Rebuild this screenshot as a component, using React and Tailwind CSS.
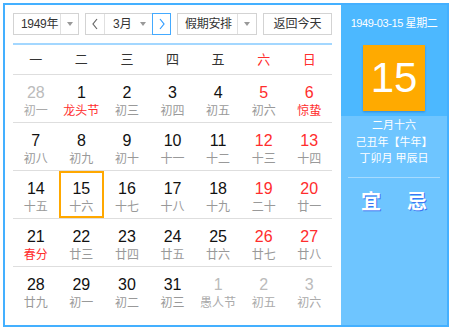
import React from 'react'

// Perpetual calendar widget — month grid on the left, day detail panel on the right.

const FONT = "font-['Liberation_Sans','Noto_Sans_CJK_SC',sans-serif]"

const weekdays = ['一', '二', '三', '四', '五', '六', '日']

// [day, lunar, flags]  o = other month, f = festival (red lunar)
const weeks = [
  [[28, '初一', 'o'], [1, '龙头节', 'f'], [2, '初三'], [3, '初四'], [4, '初五'], [5, '初六'], [6, '惊蛰', 'f']],
  [[7, '初八'], [8, '初九'], [9, '初十'], [10, '十一'], [11, '十二'], [12, '十三'], [13, '十四']],
  [[14, '十五'], [15, '十六', 's'], [16, '十七'], [17, '十八'], [18, '十九'], [19, '二十'], [20, '廿一']],
  [[21, '春分', 'f'], [22, '廿三'], [23, '廿四'], [24, '廿五'], [25, '廿六'], [26, '廿七'], [27, '廿八']],
  [[28, '廿九'], [29, '初一'], [30, '初二'], [31, '初三'], [1, '愚人节', 'o'], [2, '初五', 'o'], [3, '初六', 'o']],
]

function Caret() {
  return <span className="w-0 h-0 border-l-[3px] border-r-[3px] border-t-[4px] border-l-transparent border-r-transparent border-t-[#999]" />
}

function Select({ label, width, textWidth }) {
  return (
    <div className={`flex h-[22px] border border-[#d3d3d3] bg-white ${width}`}>
      <div className={`flex items-center pl-[7px] whitespace-nowrap text-[12px] tracking-[-0.3px] text-[#333] ${textWidth}`}>{label}</div>
      <div className="flex-1 flex items-center justify-center border-l border-[#e0e0e0]">
        <Caret />
      </div>
    </div>
  )
}

function Chevron({ dir, color }) {
  const points = dir === 'left' ? '6,1 2,6 6,11' : '2,1 6,6 2,11'
  return (
    <svg width="8" height="12" viewBox="0 0 8 12">
      <polyline points={points} fill="none" stroke={color} strokeWidth="1.2" />
    </svg>
  )
}

function DayCell({ day, lunar, flag, weekend }) {
  const other = flag === 'o'
  const selected = flag === 's'
  let numColor = 'text-[#111]'
  if (other) numColor = 'text-[#bbb]'
  else if (weekend) numColor = 'text-[#ff2d2d]'
  let lunarColor = other ? 'text-[#aaa]' : 'text-[#999]'
  if (flag === 'f') lunarColor = 'text-[#ff2d2d]'
  return (
    <div className="flex-1 flex">
      <div
        className={`flex-1 flex flex-col items-center pt-[7px] border-2 ${
          selected ? 'border-[#ffa800]' : 'border-transparent'
        }`}
      >
        <span className={`text-[16px] leading-[18px] ${numColor}`}>{day}</span>
        <span className={`text-[12px] leading-[16px] mt-px ${lunarColor}`}>{lunar}</span>
      </div>
    </div>
  )
}

export default function App() {
  return (
    <div className={`p-[3px] ${FONT}`}>
      <div className="flex w-[446px] h-[324px] border-2 border-[#44b0ff] bg-white">
        {/* Left: toolbar + month grid */}
        <div className="flex-1 flex flex-col pl-[8px] pr-[9px] pt-[8px]">
          <div className="flex items-center gap-[6px]">
            <Select label="1949年" width="w-[66px]" textWidth="w-[46px]" />
            <div className="flex h-[22px] w-[86px] border border-[#d3d3d3] bg-white">
              <div className="w-[19px] flex items-center justify-center border-r border-[#e0e0e0]">
                <Chevron dir="left" color="#666" />
              </div>
              <div className="flex-1 flex items-center pl-[8px] text-[12px] text-[#333]">3月</div>
              <div className="flex items-center pr-[6px]">
                <Caret />
              </div>
              <div className="w-[19px] -my-px -mr-px flex items-center justify-center border border-[#44aaff]">
                <Chevron dir="right" color="#2f9bff" />
              </div>
            </div>
            <Select label="假期安排" width="w-[80px]" textWidth="w-[59px]" />
            <div className="h-[22px] flex-1 flex items-center justify-center border border-[#d3d3d3] bg-white text-[12px] text-[#333]">
              返回今天
            </div>
          </div>

          <div className="mt-[8px] h-[2px] bg-[#a3d7ff]" />

          <div className="flex h-[30px] items-center border-b border-[#dedede]">
            {weekdays.map((w, i) => (
              <div
                key={w}
                className={`flex-1 text-center text-[13px] ${i >= 5 ? 'text-[#ff2d2d]' : 'text-[#333]'}`}
              >
                {w}
              </div>
            ))}
          </div>

          {weeks.map((week, r) => (
            <div key={r} className={`flex h-[48px] ${r < 4 ? 'border-b border-[#dedede]' : ''}`}>
              {week.map(([day, lunar, flag], i) => (
                <DayCell key={i} day={day} lunar={lunar} flag={flag} weekend={i >= 5} />
              ))}
            </div>
          ))}
        </div>

        {/* Right: selected day detail */}
        <div className="w-[106px] flex flex-col bg-[#6ec5ff]">
          <div className="flex flex-col items-center bg-[#4cb8ff] pt-[10px] pb-[5px]">
            <div className="text-[11px] leading-[16px] tracking-[-0.4px] whitespace-nowrap text-white">1949-03-15 星期二</div>
            <div className="mt-[14px] w-[62px] h-[66px] flex items-center justify-center bg-[#ffaa00] shadow-[0_1px_2px_rgba(0,60,140,0.35)]">
              <span className="text-[42px] leading-none text-white">15</span>
            </div>
          </div>
          <div className="flex flex-col items-center pt-px text-[11px] leading-[16.5px] text-white">
            <div>二月十六</div>
            <div>己丑年【牛年】</div>
            <div>丁卯月 甲辰日</div>
          </div>
          <div className="mt-[10px] mx-[7px] h-px bg-[#a6dbff]" />
          <div className="mt-[12px] flex justify-center gap-[26px] text-[20px] leading-[24px] font-bold text-white [text-shadow:1px_1px_0_#3d74f2]">
            <span>宜</span>
            <span>忌</span>
          </div>
        </div>
      </div>
    </div>
  )
}
